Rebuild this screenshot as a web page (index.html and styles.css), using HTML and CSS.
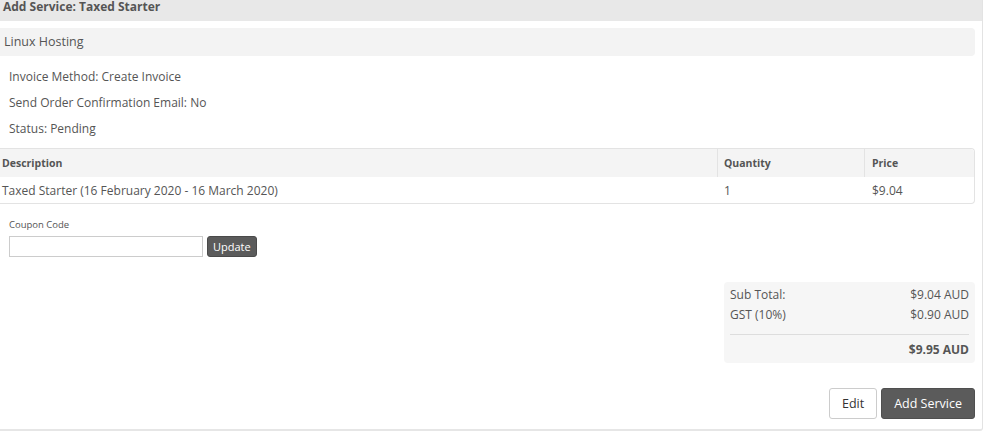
FILE: index.html
```html
<!DOCTYPE html>
<html lang="en">
<head>
    <meta charset="UTF-8">
    <meta name="viewport" content="width=device-width, initial-scale=1.0">
    <title>Add Service</title>
    <link rel="stylesheet" href="styles.css">
</head>
<body>
    <div class="panel">
        <div class="panel-heading">Add Service: Taxed Starter</div>
        <div class="panel-body">
            <div class="product-group">Linux Hosting</div>

            <ul class="order-details">
                <li>Invoice Method: Create Invoice</li>
                <li>Send Order Confirmation Email: No</li>
                <li>Status: Pending</li>
            </ul>

            <table class="items">
                <thead>
                    <tr>
                        <th class="col-desc">Description</th>
                        <th class="col-qty">Quantity</th>
                        <th class="col-price">Price</th>
                    </tr>
                </thead>
                <tbody>
                    <tr>
                        <td class="col-desc">Taxed Starter (16 February 2020 - 16 March 2020)</td>
                        <td class="col-qty">1</td>
                        <td class="col-price">$9.04</td>
                    </tr>
                </tbody>
            </table>

            <div class="coupon">
                <label for="coupon-code">Coupon Code</label>
                <div class="coupon-row">
                    <input type="text" id="coupon-code">
                    <button class="btn-small">Update</button>
                </div>
            </div>

            <div class="totals-wrap">
                <div class="totals">
                    <div class="total-line"><span>Sub Total:</span><span>$9.04 AUD</span></div>
                    <div class="total-line"><span>GST (10%)</span><span>$0.90 AUD</span></div>
                    <div class="total-line grand"><span></span><span>$9.95 AUD</span></div>
                </div>
            </div>

            <div class="actions">
                <button class="btn btn-default">Edit</button>
                <button class="btn btn-dark">Add Service</button>
            </div>
        </div>
    </div>
</body>
</html>
```

FILE: styles.css
```css
body {
    font-family: "Open Sans", Arial, sans-serif;
    margin: 0;
    padding: 0;
    background-color: #fff;
    color: #555;
    font-size: 12px;
}
.panel {
    width: 983px;
    box-sizing: border-box;
    border-right: 1px solid #e3e3e3;
    border-bottom: 2px solid #e6e6e6;
    border-bottom-right-radius: 3px;
}
.panel-heading {
    height: 21px;
    line-height: 13px;
    padding-left: 3px;
    background-color: #e8e8e8;
    font-weight: bold;
    font-size: 12px;
    color: #555;
}
.panel-body {
    padding: 7px 7px 10px 0;
}
.product-group {
    height: 28px;
    line-height: 28px;
    padding-left: 4px;
    background-color: #f3f3f3;
    border-radius: 0 4px 4px 0;
    font-size: 12.5px;
}
.order-details {
    list-style: none;
    margin: 8px 0 0 0;
    padding: 0 0 0 9px;
}
.order-details li {
    line-height: 26px;
}
.items {
    width: 100%;
    margin-top: 6px;
    table-layout: fixed;
    border-collapse: separate;
    border-spacing: 0;
    border: 1px solid #e3e3e3;
    border-left: none;
    border-radius: 0 4px 4px 0;
}
.items th {
    height: 28px;
    background-color: #f4f4f4;
    text-align: left;
    font-size: 10.5px;
    font-weight: bold;
    color: #555;
    padding: 0;
}
.items td {
    height: 26px;
    padding: 0;
}
.items .col-desc {
    padding-left: 2px;
}
.items .col-qty {
    width: 140px;
    padding-left: 6px;
}
.items .col-price {
    width: 102px;
    padding-left: 7px;
}
.items td.col-qty,
.items td.col-price {
    border-left: 1px solid transparent;
}
.items th.col-qty,
.items th.col-price {
    border-left: 1px solid #e3e3e3;
}
.items th.col-price {
    border-top-right-radius: 4px;
}
.coupon {
    margin: 14px 0 0 9px;
}
.coupon label {
    display: block;
    font-size: 9.5px;
    line-height: 14px;
    margin-bottom: 4px;
}
.coupon-row {
    display: flex;
    gap: 4px;
}
.coupon input {
    width: 194px;
    height: 21px;
    box-sizing: border-box;
    border: 1px solid #ccc;
    margin: 0;
    padding: 0 4px;
}
.btn-small {
    height: 21px;
    padding: 0 5px;
    background-color: #5b5b5b;
    color: #fff;
    border: 1px solid #4a4a4a;
    border-radius: 3px;
    font-family: "Open Sans", Arial, sans-serif;
    font-size: 11px;
    cursor: pointer;
}
.totals-wrap {
    display: flex;
    justify-content: flex-end;
    margin-top: 25px;
}
.totals {
    width: 251px;
    box-sizing: border-box;
    padding: 3px 6px;
    background-color: #f6f6f6;
    border-radius: 4px;
}
.total-line {
    display: flex;
    justify-content: space-between;
    line-height: 20px;
}
.total-line.grand {
    margin-top: 9px;
    padding-top: 5px;
    border-top: 1px solid #ddd;
    font-weight: bold;
}
.actions {
    display: flex;
    justify-content: flex-end;
    gap: 4px;
    margin-top: 25px;
}
.btn {
    height: 31px;
    font-family: "Open Sans", Arial, sans-serif;
    font-size: 12.5px;
    border-radius: 3px;
    cursor: pointer;
}
.btn-default {
    padding: 0 12px;
    background-color: #fff;
    color: #333;
    border: 1px solid #ccc;
}
.btn-dark {
    padding: 0 12px;
    background-color: #5b5b5b;
    color: #fff;
    border: 1px solid #4f4f4f;
}
```
